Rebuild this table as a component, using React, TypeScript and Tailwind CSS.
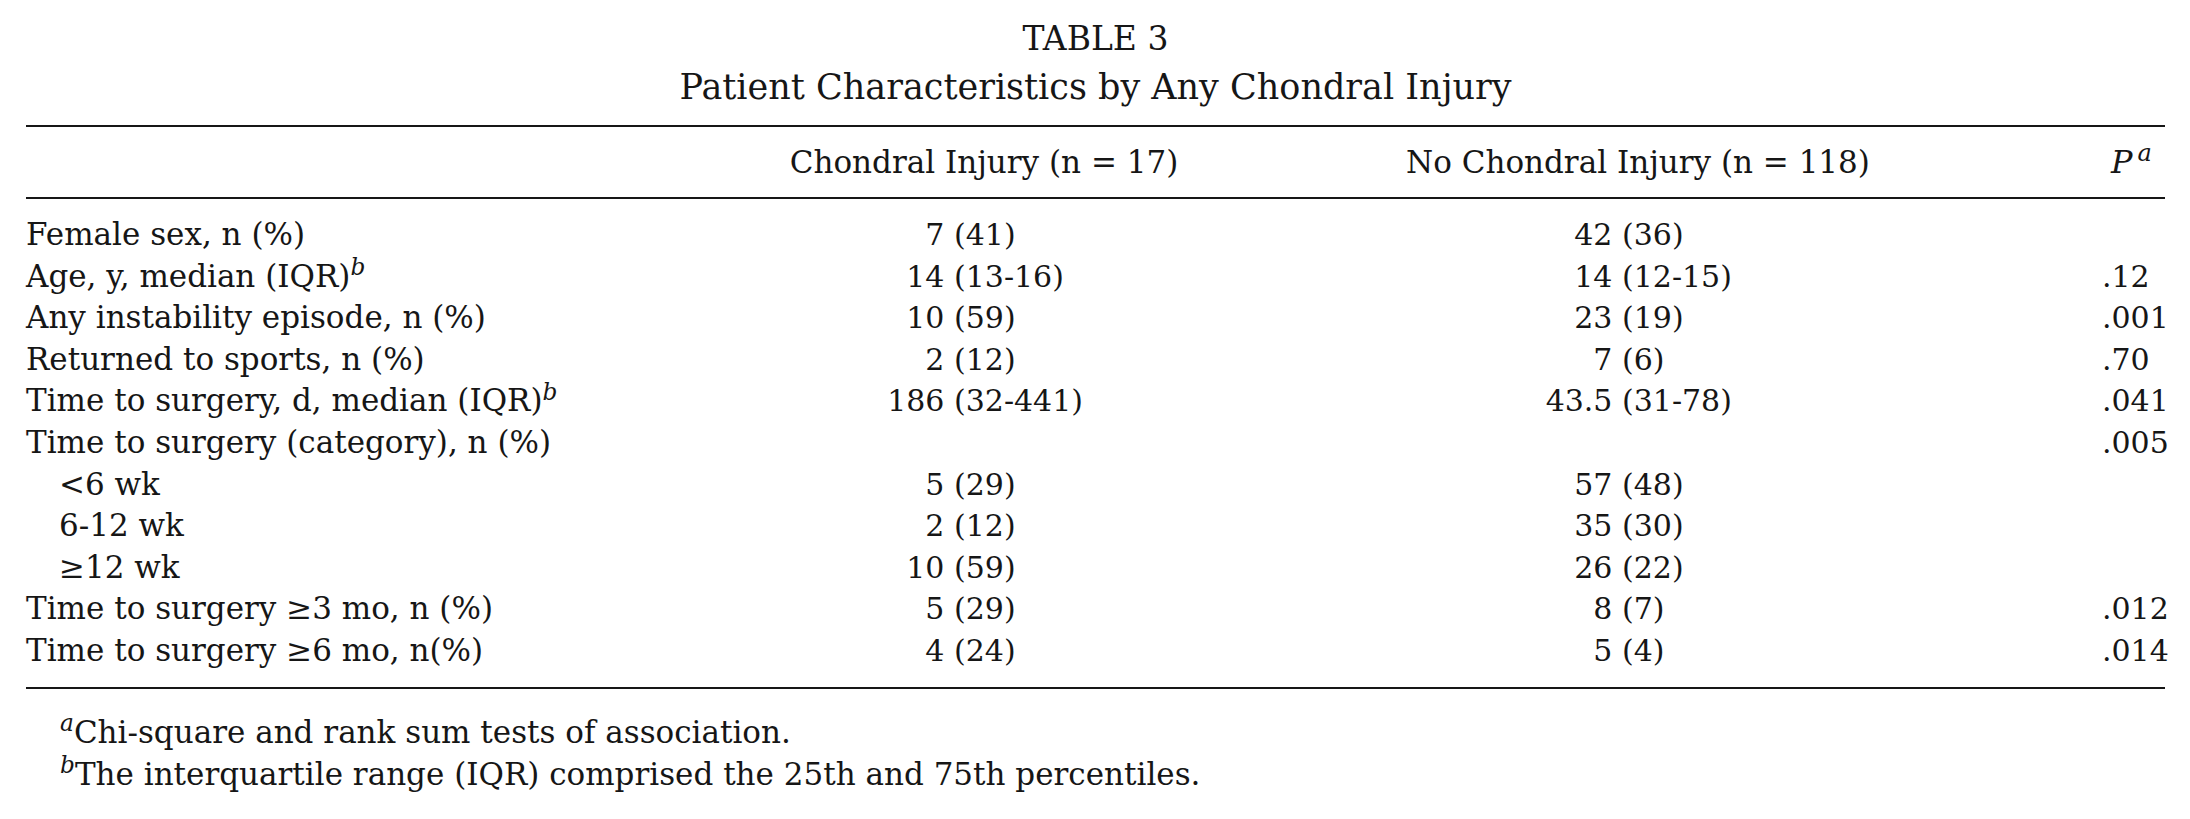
type Row = {
  label: React.ReactNode;
  indent?: boolean;
  a?: [string, string];
  b?: [string, string];
  p?: string;
};

const rows: Row[] = [
  { label: "Female sex, n (%)", a: ["7", "(41)"], b: ["42", "(36)"] },
  {
    label: (
      <>
        Age, y, median (IQR)<sup className="italic">b</sup>
      </>
    ),
    a: ["14", "(13-16)"],
    b: ["14", "(12-15)"],
    p: ".12",
  },
  { label: "Any instability episode, n (%)", a: ["10", "(59)"], b: ["23", "(19)"], p: ".001" },
  { label: "Returned to sports, n (%)", a: ["2", "(12)"], b: ["7", "(6)"], p: ".70" },
  {
    label: (
      <>
        Time to surgery, d, median (IQR)<sup className="italic">b</sup>
      </>
    ),
    a: ["186", "(32-441)"],
    b: ["43.5", "(31-78)"],
    p: ".041",
  },
  { label: "Time to surgery (category), n (%)", p: ".005" },
  { label: "<6 wk", indent: true, a: ["5", "(29)"], b: ["57", "(48)"] },
  { label: "6-12 wk", indent: true, a: ["2", "(12)"], b: ["35", "(30)"] },
  { label: "≥12 wk", indent: true, a: ["10", "(59)"], b: ["26", "(22)"] },
  { label: "Time to surgery ≥3 mo, n (%)", a: ["5", "(29)"], b: ["8", "(7)"], p: ".012" },
  { label: "Time to surgery ≥6 mo, n(%)", a: ["4", "(24)"], b: ["5", "(4)"], p: ".014" },
];

const Value = ({ v, split }: { v?: [string, string]; split: string }) => {
  if (!v) return <div />;
  return (
    <div className="flex whitespace-nowrap">
      <span className={`${split} text-right`}>{v[0]}&nbsp;</span>
      <span>{v[1]}</span>
    </div>
  );
};

const App = () => {
  return (
    <div className="min-h-screen bg-white pt-[15px] pl-[26px] text-[30px] text-[#161616] font-['DejaVu_Serif',serif]">
      <div className="w-[2139px]">
        <div className="text-center leading-[48px]">
          <div className="text-[33px]">TABLE 3</div>
          <div className="text-[35px]">Patient Characteristics by Any Chondral Injury</div>
        </div>

        <div className="mt-[14px] h-[2px] bg-[#161616]" />

        <div className="mt-[14px] grid grid-cols-[774px_600px_702px_63px] leading-[42px]">
          <div />
          <div className="flex w-[368px] justify-center whitespace-nowrap text-[31px]">
            Chondral Injury (n = 17)
          </div>
          <div className="flex w-[476px] justify-center whitespace-nowrap text-[31px]">
            No Chondral Injury (n = 118)
          </div>
          <div className="pl-[9px] whitespace-nowrap text-[32px]">
            <span className="italic">P</span>
            <sup className="pl-[5px] italic">a</sup>
          </div>
        </div>

        <div className="mt-[14px] h-[2px] bg-[#161616]" />

        <div className="mt-[15px] flex flex-col">
          {rows.map((r, i) => (
            <div
              key={i}
              className="grid h-[41.6px] grid-cols-[774px_600px_702px_63px] items-center leading-[41.6px]"
            >
              <div className={`whitespace-nowrap text-[31px] ${r.indent ? "pl-[33px]" : ""}`}>
                {r.label}
              </div>
              <Value v={r.a} split="w-[154px]" />
              <Value v={r.b} split="w-[222px]" />
              <div className="whitespace-nowrap">{r.p}</div>
            </div>
          ))}
        </div>

        <div className="mt-[15px] h-[2px] bg-[#161616]" />

        <div className="mt-[22px] pl-[34px] text-[31px] leading-[42px]">
          <div>
            <sup className="italic">a</sup>Chi-square and rank sum tests of association.
          </div>
          <div>
            <sup className="italic">b</sup>The interquartile range (IQR) comprised the 25th and 75th
            percentiles.
          </div>
        </div>
      </div>
    </div>
  );
};

export default App;
